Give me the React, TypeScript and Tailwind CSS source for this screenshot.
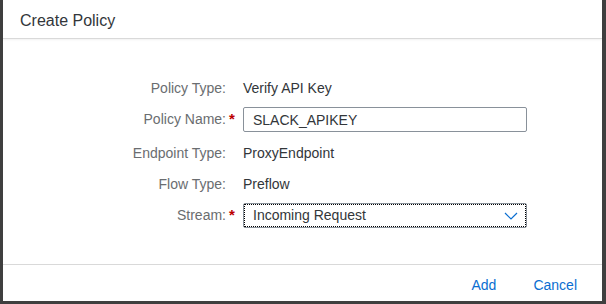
import React, { useState } from "react";

const FONT = { fontFamily: '"Liberation Sans", Arial, sans-serif' };

const Field: React.FC<{ label: string; required?: boolean; className: string; children: React.ReactNode }> = ({
  label,
  required,
  className,
  children,
}) => (
  <div className={`flex items-center ${className}`}>
    <div className="w-[223px] text-right text-[14px] text-[#6a6d70]">{label}</div>
    <div className="w-[17px] pl-[3px] text-[15px] font-bold text-[#bb0000]">{required ? "*" : ""}</div>
    <div className="flex-1 text-[14px] text-[#32363a]">{children}</div>
  </div>
);

export default function App() {
  const [name, setName] = useState("SLACK_APIKEY");

  return (
    <div className="w-[606px] h-[304px] bg-[#3f3f3f] overflow-hidden" style={FONT}>
      <div className="ml-[3px] w-[599px] h-[301px] bg-white flex flex-col">
        {/* Header */}
        <div className="h-[39px] flex items-center pl-[17px] pt-[3px] border-b border-[#d9d9d9] shadow-[0_1px_2px_rgba(0,0,0,0.06)]">
          <span className="text-[16px] text-[#32363a]">Create Policy</span>
        </div>

        {/* Body */}
        <div className="flex-1 flex flex-col pt-[34px]">
          <Field label="Policy Type:" className="h-[30px]">
            Verify API Key
          </Field>
          <Field label="Policy Name:" required className="h-[33px]">
            <input
              value={name}
              onChange={(e) => setName(e.target.value)}
              className="w-[284px] h-[25px] border border-[#89919a] rounded-[2px] px-[9px] text-[14px] text-[#32363a] outline-none"
              style={FONT}
            />
          </Field>
          <Field label="Endpoint Type:" className="h-[34px]">
            ProxyEndpoint
          </Field>
          <Field label="Flow Type:" className="h-[28px]">
            Preflow
          </Field>
          <Field label="Stream:" required className="h-[35px]">
            <div className="w-[284px] h-[25px] border border-[#89919a] rounded-[2px] outline outline-1 outline-dotted outline-black -outline-offset-2 flex items-center justify-between pl-[9px] pr-[8px]">
              <span>Incoming Request</span>
              <svg width="14" height="8" viewBox="0 0 14 8" fill="none">
                <path d="M1 1l6 6 6-6" stroke="#0a6ed1" strokeWidth="1.2" />
              </svg>
            </div>
          </Field>
        </div>

        {/* Footer */}
        <div className="h-[37px] border-t border-[#d9d9d9] flex items-start justify-end pt-[10px] pr-[25px] gap-[37px]">
          <button className="text-[14px] leading-[20px] text-[#0a6ed1]">Add</button>
          <button className="text-[14px] leading-[20px] text-[#0a6ed1]">Cancel</button>
        </div>
      </div>
    </div>
  );
}
